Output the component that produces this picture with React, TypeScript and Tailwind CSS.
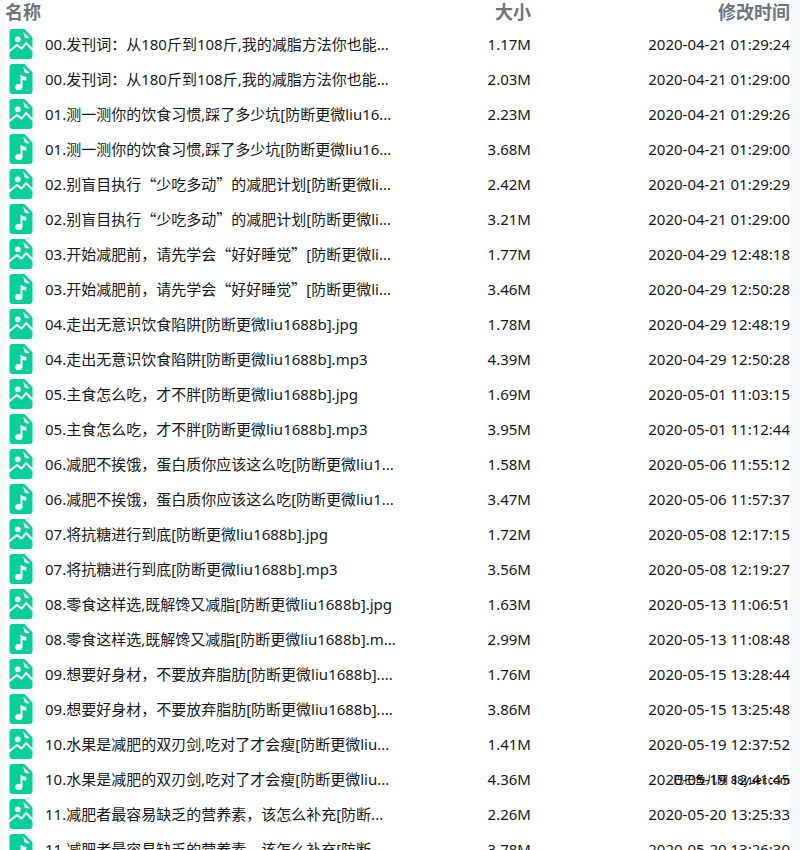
import { Fragment } from 'react'

type FileKind = 'jpg' | 'mp3'

interface FileRow {
  kind: FileKind
  name: string
  size: string
  modified: string
}

const files: FileRow[] = [
  { kind: 'jpg', name: '00.发刊词：从180斤到108斤,我的减脂方法你也能...', size: '1.17M', modified: '2020-04-21 01:29:24' },
  { kind: 'mp3', name: '00.发刊词：从180斤到108斤,我的减脂方法你也能...', size: '2.03M', modified: '2020-04-21 01:29:00' },
  { kind: 'jpg', name: '01.测一测你的饮食习惯,踩了多少坑[防断更微liu16...', size: '2.23M', modified: '2020-04-21 01:29:26' },
  { kind: 'mp3', name: '01.测一测你的饮食习惯,踩了多少坑[防断更微liu16...', size: '3.68M', modified: '2020-04-21 01:29:00' },
  { kind: 'jpg', name: '02.别盲目执行“少吃多动”的减肥计划[防断更微li...', size: '2.42M', modified: '2020-04-21 01:29:29' },
  { kind: 'mp3', name: '02.别盲目执行“少吃多动”的减肥计划[防断更微li...', size: '3.21M', modified: '2020-04-21 01:29:00' },
  { kind: 'jpg', name: '03.开始减肥前，请先学会“好好睡觉”[防断更微li...', size: '1.77M', modified: '2020-04-29 12:48:18' },
  { kind: 'mp3', name: '03.开始减肥前，请先学会“好好睡觉”[防断更微li...', size: '3.46M', modified: '2020-04-29 12:50:28' },
  { kind: 'jpg', name: '04.走出无意识饮食陷阱[防断更微liu1688b].jpg', size: '1.78M', modified: '2020-04-29 12:48:19' },
  { kind: 'mp3', name: '04.走出无意识饮食陷阱[防断更微liu1688b].mp3', size: '4.39M', modified: '2020-04-29 12:50:28' },
  { kind: 'jpg', name: '05.主食怎么吃，才不胖[防断更微liu1688b].jpg', size: '1.69M', modified: '2020-05-01 11:03:15' },
  { kind: 'mp3', name: '05.主食怎么吃，才不胖[防断更微liu1688b].mp3', size: '3.95M', modified: '2020-05-01 11:12:44' },
  { kind: 'jpg', name: '06.减肥不挨饿，蛋白质你应该这么吃[防断更微liu1...', size: '1.58M', modified: '2020-05-06 11:55:12' },
  { kind: 'mp3', name: '06.减肥不挨饿，蛋白质你应该这么吃[防断更微liu1...', size: '3.47M', modified: '2020-05-06 11:57:37' },
  { kind: 'jpg', name: '07.将抗糖进行到底[防断更微liu1688b].jpg', size: '1.72M', modified: '2020-05-08 12:17:15' },
  { kind: 'mp3', name: '07.将抗糖进行到底[防断更微liu1688b].mp3', size: '3.56M', modified: '2020-05-08 12:19:27' },
  { kind: 'jpg', name: '08.零食这样选,既解馋又减脂[防断更微liu1688b].jpg', size: '1.63M', modified: '2020-05-13 11:06:51' },
  { kind: 'mp3', name: '08.零食这样选,既解馋又减脂[防断更微liu1688b].m...', size: '2.99M', modified: '2020-05-13 11:08:48' },
  { kind: 'jpg', name: '09.想要好身材，不要放弃脂肪[防断更微liu1688b]....', size: '1.76M', modified: '2020-05-15 13:28:44' },
  { kind: 'mp3', name: '09.想要好身材，不要放弃脂肪[防断更微liu1688b]....', size: '3.86M', modified: '2020-05-15 13:25:48' },
  { kind: 'jpg', name: '10.水果是减肥的双刃剑,吃对了才会瘦[防断更微liu...', size: '1.41M', modified: '2020-05-19 12:37:52' },
  { kind: 'mp3', name: '10.水果是减肥的双刃剑,吃对了才会瘦[防断更微liu...', size: '4.36M', modified: '2020-05-19 12:41:45' },
  { kind: 'jpg', name: '11.减肥者最容易缺乏的营养素，该怎么补充[防断...', size: '2.26M', modified: '2020-05-20 13:25:33' },
  { kind: 'mp3', name: '11.减肥者最容易缺乏的营养素，该怎么补充[防断...', size: '3.78M', modified: '2020-05-20 13:26:30' },
]

function FileIcon({ kind }: { kind: FileKind }) {
  return (
    <svg width="24" height="30" viewBox="0 0 24 30" className="block" aria-hidden="true">
      <path d="M3 0H15.5L23.5 8.5V27A3 3 0 0 1 20.5 30H3.5A3 3 0 0 1 .5 27V3A3 3 0 0 1 3.5 0Z" fill="#06cf9c" />
      <path d="M14.3 2.8L20.8 9.2H17.2Q15.8 9.2 15.4 7.8Z" fill="#fff" />
      {kind === 'jpg' ? (
        <>
          <circle cx="8.8" cy="10.3" r="2.9" fill="#fff" />
          <path d="M0 22.5L8 16L12.5 19.6L17.2 14L24 21.2" fill="none" stroke="#fff" strokeWidth="2" />
        </>
      ) : (
        <>
          <ellipse cx="9.8" cy="23" rx="3.7" ry="3.1" fill="#fff" />
          <path d="M11.5 23V10.8Q13.8 12.8 17.3 13V16.6Q15.2 16.6 13.5 15.8V23Z" fill="#fff" />
        </>
      )}
    </svg>
  )
}

// Curly quotes take a full character cell in Chinese text
function FileName({ name }: { name: string }) {
  return (
    <>
      {name.split(/([“”])/).map((part, i) =>
        part === '“' || part === '”' ? (
          <span key={i} className="font-['Noto_Sans_CJK_SC',sans-serif]">{part}</span>
        ) : (
          <Fragment key={i}>{part}</Fragment>
        )
      )}
    </>
  )
}

export default function App() {
  return (
    <div
      lang="zh-CN"
      className="relative h-screen overflow-hidden bg-[#f7f8fa] pl-[5px] pr-2.5 font-['Noto_Sans','Noto_Sans_CJK_SC',sans-serif]"
    >
      <table className="w-full table-fixed border-collapse bg-white text-[15px] leading-5 text-[#15181b]">
        <thead>
          <tr className="h-[26px] text-lg leading-6 text-[#6c757d]">
            <th className="w-1/2 p-0 pb-0.5 text-left font-bold">名称</th>
            <th className="w-[17%] p-0 pb-0.5 text-right font-bold">大小</th>
            <th className="w-[33%] p-0 pb-0.5 text-right font-bold">修改时间</th>
          </tr>
        </thead>
        <tbody>
          {files.map((file, i) => (
            <tr key={i} className="h-[35px]">
              <td className="p-0">
                <div className="flex items-center gap-3 whitespace-nowrap pl-1">
                  <FileIcon kind={file.kind} />
                  <span><FileName name={file.name} /></span>
                </div>
              </td>
              <td className="p-0 text-right">{file.size}</td>
              <td className="p-0 text-right">{file.modified}</td>
            </tr>
          ))}
        </tbody>
      </table>

      <div className="absolute bottom-[62px] right-2.5 text-[11px] leading-4 text-black">巴巴鱼儿网 88yuer.com</div>
    </div>
  )
}
